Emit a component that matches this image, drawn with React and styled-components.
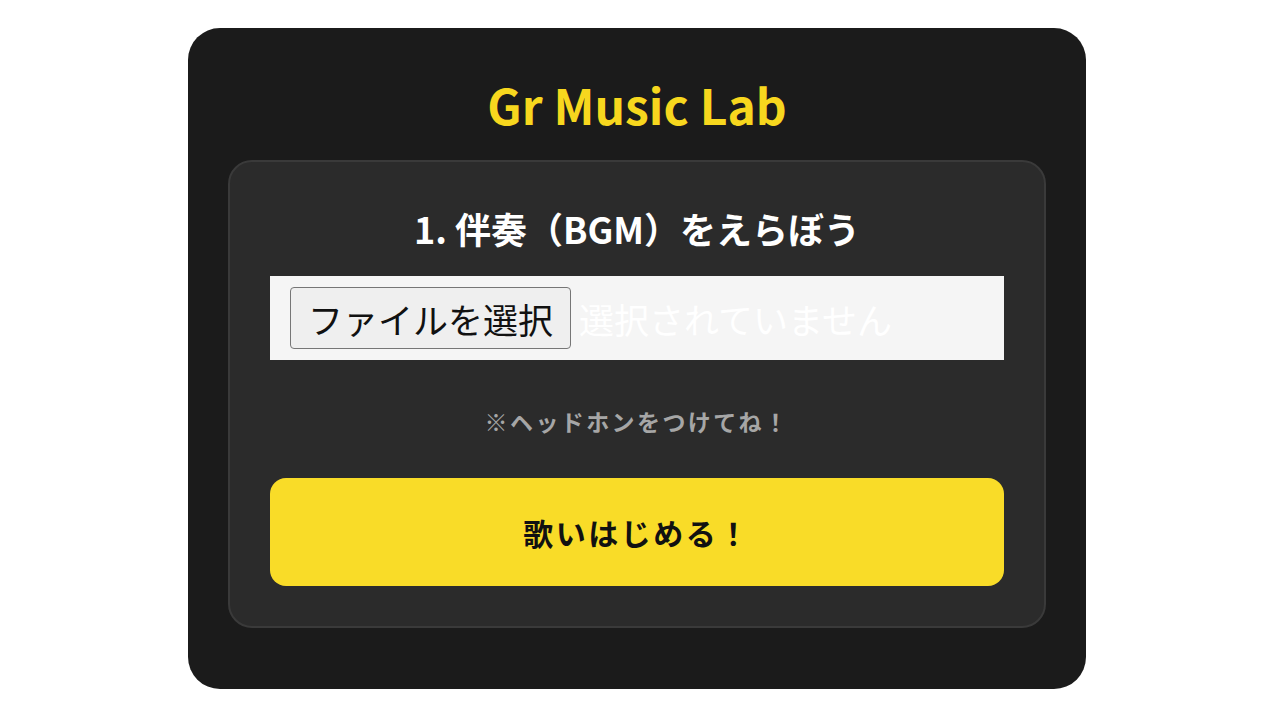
import React from "react";
import styled, { createGlobalStyle } from "styled-components";

const GlobalStyle = createGlobalStyle`
  body {
    margin: 0;
    background: #ffffff;
    font-family: "Noto Sans CJK JP", "Noto Sans", sans-serif;
  }
`;

const App = () => {
  return (
    <>
      <GlobalStyle />
      <Page>
        <Card>
          <Title>Gr Music Lab</Title>
          <Panel>
            <StepHeading>1. 伴奏（BGM）をえらぼう</StepHeading>
            <FileField>
              <FileButton type="button">ファイルを選択</FileButton>
              <FileName>選択されていません</FileName>
            </FileField>
            <Note>※ヘッドホンをつけてね！</Note>
            <StartButton type="button">歌いはじめる！</StartButton>
          </Panel>
        </Card>
      </Page>
    </>
  );
};

const Page = styled.main`
  display: flex;
  justify-content: center;
  padding: 28px 6px 0 0;
`;

const Card = styled.section`
  width: 898px;
  box-sizing: border-box;
  padding: 40px 40px 61px;
  background: #1b1b1b;
  border-radius: 32px;
`;

const Title = styled.h1`
  margin: 0 0 20px;
  text-align: center;
  font-size: 48px;
  line-height: 72px;
  font-weight: 700;
  color: #f7d71e;
`;

const Panel = styled.div`
  display: flex;
  flex-direction: column;
  padding: 40px;
  background: #2b2b2b;
  border: 2px solid #3a3a3a;
  border-radius: 24px;
`;

const StepHeading = styled.h2`
  margin: 0 0 22px;
  text-align: center;
  font-size: 36px;
  line-height: 52px;
  font-weight: 700;
  color: #ffffff;
`;

const FileField = styled.div`
  display: flex;
  align-items: center;
  gap: 8px;
  height: 84px;
  box-sizing: border-box;
  padding: 0 20px;
  background: #f5f5f5;
`;

const FileButton = styled.button`
  height: 62px;
  padding: 0 17px;
  font-family: inherit;
  font-size: 35px;
  color: #111111;
  background: #efefef;
  border: 1px solid #767676;
  border-radius: 4px;
`;

const FileName = styled.span`
  font-size: 35px;
  color: #ffffff;
  white-space: nowrap;
`;

const Note = styled.p`
  margin: 45px 0 40px;
  text-align: center;
  font-size: 23px;
  line-height: 33px;
  font-weight: 700;
  letter-spacing: 2.4px;
  color: #a6a6a6;
`;

const StartButton = styled.button`
  height: 108px;
  font-family: inherit;
  font-size: 30px;
  font-weight: 700;
  letter-spacing: 2.5px;
  color: #111111;
  background: #f9dc28;
  border: none;
  border-radius: 16px;
`;

export default App;
